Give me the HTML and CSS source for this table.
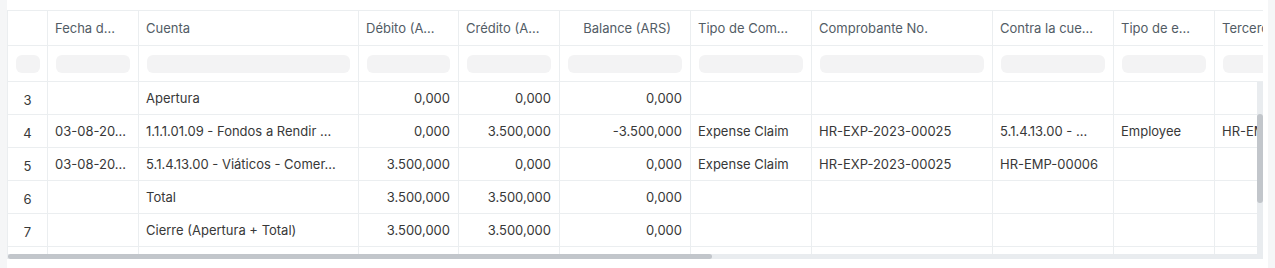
FILE: index.html
```html
<!DOCTYPE html>
<html lang="es">
<head>
<meta charset="utf-8">
<title>Libro mayor</title>
<link rel="stylesheet" href="styles.css">
</head>
<body>
<div class="page">
  <div class="gutter"></div>
  <main class="main">
    <div class="grid">
      <div class="head">
        <div class="row hrow">
          <div class="cell c0"></div>
          <div class="cell c1">Fecha d...</div>
          <div class="cell c2">Cuenta</div>
          <div class="cell c3">Débito (A...</div>
          <div class="cell c4">Crédito (A...</div>
          <div class="cell c5 num bal">Balance (ARS)</div>
          <div class="cell c6">Tipo de Com...</div>
          <div class="cell c7">Comprobante No.</div>
          <div class="cell c8">Contra la cue...</div>
          <div class="cell c9">Tipo de e...</div>
          <div class="cell c10">Tercero</div>
        </div>
        <div class="row frow">
          <div class="cell c0 fc"><span class="pill"></span></div>
          <div class="cell c1 fc"><span class="pill"></span></div>
          <div class="cell c2 fc"><span class="pill"></span></div>
          <div class="cell c3 fc"><span class="pill"></span></div>
          <div class="cell c4 fc"><span class="pill"></span></div>
          <div class="cell c5 fc"><span class="pill"></span></div>
          <div class="cell c6 fc"><span class="pill"></span></div>
          <div class="cell c7 fc"><span class="pill"></span></div>
          <div class="cell c8 fc"><span class="pill"></span></div>
          <div class="cell c9 fc"><span class="pill"></span></div>
          <div class="cell c10 fc"><span class="pill"></span></div>
        </div>
      </div>
      <div class="bodyarea">
        <div class="rows">
          <div class="row brow">
            <div class="cell c0 idx">3</div>
            <div class="cell c1"></div>
            <div class="cell c2">Apertura</div>
            <div class="cell c3 num">0,000</div>
            <div class="cell c4 num">0,000</div>
            <div class="cell c5 num">0,000</div>
            <div class="cell c6"></div>
            <div class="cell c7"></div>
            <div class="cell c8"></div>
            <div class="cell c9"></div>
            <div class="cell c10"></div>
          </div>
          <div class="row brow">
            <div class="cell c0 idx">4</div>
            <div class="cell c1">03-08-20...</div>
            <div class="cell c2">1.1.1.01.09 - Fondos a Rendir ...</div>
            <div class="cell c3 num">0,000</div>
            <div class="cell c4 num">3.500,000</div>
            <div class="cell c5 num">-3.500,000</div>
            <div class="cell c6">Expense Claim</div>
            <div class="cell c7">HR-EXP-2023-00025</div>
            <div class="cell c8">5.1.4.13.00 - ...</div>
            <div class="cell c9">Employee</div>
            <div class="cell c10">HR-EMP-00006</div>
          </div>
          <div class="row brow">
            <div class="cell c0 idx">5</div>
            <div class="cell c1">03-08-20...</div>
            <div class="cell c2">5.1.4.13.00 - Viáticos - Comer...</div>
            <div class="cell c3 num">3.500,000</div>
            <div class="cell c4 num">0,000</div>
            <div class="cell c5 num">0,000</div>
            <div class="cell c6">Expense Claim</div>
            <div class="cell c7">HR-EXP-2023-00025</div>
            <div class="cell c8">HR-EMP-00006</div>
            <div class="cell c9"></div>
            <div class="cell c10"></div>
          </div>
          <div class="row brow">
            <div class="cell c0 idx">6</div>
            <div class="cell c1"></div>
            <div class="cell c2">Total</div>
            <div class="cell c3 num">3.500,000</div>
            <div class="cell c4 num">3.500,000</div>
            <div class="cell c5 num">0,000</div>
            <div class="cell c6"></div>
            <div class="cell c7"></div>
            <div class="cell c8"></div>
            <div class="cell c9"></div>
            <div class="cell c10"></div>
          </div>
          <div class="row brow">
            <div class="cell c0 idx">7</div>
            <div class="cell c1"></div>
            <div class="cell c2">Cierre (Apertura + Total)</div>
            <div class="cell c3 num">3.500,000</div>
            <div class="cell c4 num">3.500,000</div>
            <div class="cell c5 num">0,000</div>
            <div class="cell c6"></div>
            <div class="cell c7"></div>
            <div class="cell c8"></div>
            <div class="cell c9"></div>
            <div class="cell c10"></div>
          </div>
          <div class="row brow">
            <div class="cell c0 idx"></div>
            <div class="cell c1"></div>
            <div class="cell c2"></div>
            <div class="cell c3"></div>
            <div class="cell c4"></div>
            <div class="cell c5"></div>
            <div class="cell c6"></div>
            <div class="cell c7"></div>
            <div class="cell c8"></div>
            <div class="cell c9"></div>
            <div class="cell c10"></div>
          </div>
        </div>
        <div class="vtrack"><div class="vthumb"></div></div>
      </div>
      <div class="htrack"><div class="hthumb"></div></div>
    </div>
  </main>
  <div class="gutter"></div>
</div>
</body>
</html>
```

FILE: styles.css
```css
* { box-sizing: border-box; }
html, body { margin: 0; padding: 0; background: #ffffff; }
body {
  font-family: Inter, "Noto Sans", "Liberation Sans", sans-serif;
  font-size: 13px;
  color: #383838;
  width: 1275px;
  height: 268px;
  overflow: hidden;
}
.page { display: flex; height: 268px; }
.gutter { width: 7px; flex: none; background: #f5f6f7; }
.main { flex: 1; padding-top: 10px; background: #fff; }
.grid {
  width: 1256px;
  border-left: 1px solid #ebeef0;
  display: flex;
  flex-direction: column;
}
.head { overflow: hidden; border-top: 1px solid #ebeef0; }
.row { display: flex; white-space: nowrap; }
.cell {
  flex: none;
  overflow: hidden;
  white-space: nowrap;
  border-right: 1px solid #ebeef0;
  padding: 0 8px 0 7px;
  display: flex;
  align-items: center;
}
.num { justify-content: flex-end; }
.c0 { width: 40px; justify-content: center; padding: 0; }
.c1 { width: 91px; }
.c2 { width: 220px; }
.c3 { width: 100px; }
.c4 { width: 101px; }
.c5 { width: 131px; }
.c6 { width: 121px; }
.c7 { width: 181px; }
.c8 { width: 121px; }
.c9 { width: 101px; }
.c10 { width: 101px; }
.hrow { height: 35px; border-bottom: 1px solid #ebeef0; color: #525c65; }
.hrow .cell { padding-bottom: 1px; }
.hrow .bal { padding-right: 19px; }
.frow { height: 36px; border-bottom: 1px solid #ebeef0; }
.fc { padding: 0 8px; }
.c0.fc { padding: 0 7px 0 8px; }
.pill {
  display: block;
  width: 100%;
  height: 18px;
  border-radius: 6px;
  background: #f3f3f4;
  margin-top: 1px;
}
.bodyarea { display: flex; height: 172px; }
.rows { width: 1249px; overflow: hidden; }
.brow { height: 33px; border-bottom: 1px solid #ebeef0; }
.idx { padding-top: 4px; color: #383838; }
.vtrack { width: 6px; flex: none; background: #e9ecef; padding-top: 32px; }
.vthumb { height: 89px; background: #c2c6cb; border-radius: 3px; }
.htrack { height: 5px; background: #e9ecef; width: 1255px; }
.hthumb { width: 704px; height: 5px; background: #c2c6cb; border-radius: 3px; }
```
